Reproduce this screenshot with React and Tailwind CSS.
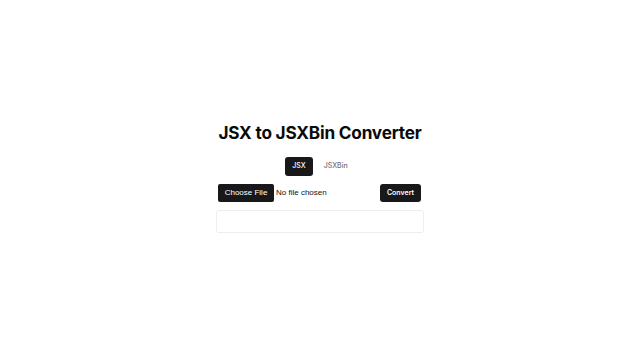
import { useState } from 'react';

// Converter page: title, mode tabs, file picker row and an output box.
const TABS = ['JSX', 'JSXBin'];

export default function App() {
  const [tab, setTab] = useState('JSX');
  const [fileName, setFileName] = useState('');

  return (
    <div
      className="min-h-[357px] w-full flex items-center justify-center bg-white text-[#0a0a0a] pb-[2px]"
      style={{ fontFamily: 'Inter, "Noto Sans", sans-serif' }}
    >
      <div className="w-[208px] flex flex-col items-center">
        <h1 className="text-[17.2px] leading-[22px] font-bold tracking-[-0.2px] whitespace-nowrap">
          JSX to JSXBin Converter
        </h1>

        {/* mode tabs */}
        <div className="mt-[13px] flex items-center gap-[4px]">
          {TABS.map((t) => (
            <button
              key={t}
              onClick={() => setTab(t)}
              className={`h-[19px] px-[7px] rounded-[3px] text-[7px] font-medium ${
                tab === t ? 'bg-[#18181b] text-white' : 'bg-transparent text-[#71717a]'
              }`}
            >
              {t}
            </button>
          ))}
        </div>

        {/* file picker + convert */}
        <div className="mt-[8px] w-full flex items-center justify-between px-[2px]">
          <label className="flex items-center cursor-pointer">
            <input
              type="file"
              className="hidden"
              onChange={(e) => setFileName(e.target.files?.[0]?.name || '')}
            />
            <span
              className="h-[18px] w-[56px] flex items-center justify-center rounded-[2px] bg-[#18181b] text-white text-[8px]"
              style={{ fontFamily: '"Liberation Sans", Arial, sans-serif' }}
            >
              Choose File
            </span>
            <span
              className="ml-[2px] text-[8px] text-[#111]"
              style={{ fontFamily: '"Liberation Sans", Arial, sans-serif' }}
            >
              {fileName || 'No file chosen'}
            </span>
          </label>
          <button className="h-[18px] w-[41px] rounded-[3px] bg-[#18181b] text-white text-[7px] font-semibold mr-[1px]">
            Convert
          </button>
        </div>

        {/* output */}
        <div className="mt-[8px] w-[208px] h-[23px] rounded-[3px] border border-[#eeeeee] bg-white" />
      </div>
    </div>
  );
}
